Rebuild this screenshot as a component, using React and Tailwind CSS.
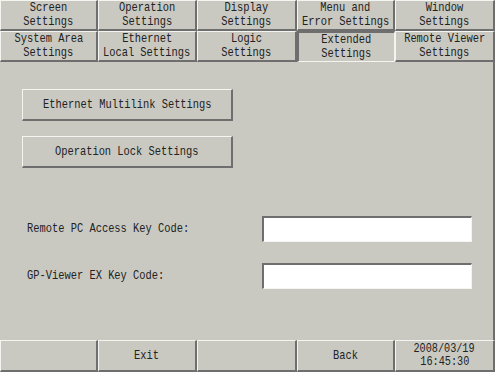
const raised =
  'border-t border-l border-t-[#f4f4f0] border-l-[#f4f4f0] border-b-2 border-r-2 border-b-[#6e6e6e] border-r-[#6e6e6e]'
const sunken =
  'border-t-2 border-l-2 border-t-[#6e6e6e] border-l-[#6e6e6e] border-b border-r border-b-[#f4f4f0] border-r-[#f4f4f0]'

const tabs = [
  ['Screen', 'Settings'],
  ['Operation', 'Settings'],
  ['Display', 'Settings'],
  ['Menu and', 'Error Settings'],
  ['Window', 'Settings'],
  ['System Area', 'Settings'],
  ['Ethernet', 'Local Settings'],
  ['Logic', 'Settings'],
  ['Extended', 'Settings'],
  ['Remote Viewer', 'Settings'],
]

function Txt({ children, className = '' }) {
  return (
    <span className={`inline-block scale-x-[0.8] whitespace-nowrap ${className}`}>{children}</span>
  )
}

function Field({ label }) {
  return (
    <div className="flex items-center">
      <div className="w-[240px] pl-[5px] text-[13px] leading-[14px]">
        <Txt className="origin-left">{label}</Txt>
      </div>
      <div className={`h-[26px] w-[210px] bg-white ${sunken}`} />
    </div>
  )
}

export default function App() {
  return (
    <div className="flex h-[372px] w-[495px] flex-col overflow-hidden bg-[#c9c9c1] font-['Liberation_Mono',monospace] text-[#222]">
      <div className="grid h-[62px] grid-cols-[98px_99px_100px_98px_100px] grid-rows-2">
        {tabs.map((t, i) => (
          <div
            key={i}
            className={`flex flex-col items-center justify-center text-[13px] leading-[14px] ${
              i === 8 ? sunken : raised
            }`}
          >
            <Txt>{t[0]}</Txt>
            <Txt>{t[1]}</Txt>
          </div>
        ))}
      </div>

      <div className="flex flex-1 flex-col border-r-2 border-r-[#6e6e6e] pl-[22px] pt-[27px]">
        <div className="flex flex-col gap-[15px]">
          <button
            type="button"
            className={`flex h-[32px] w-[211px] items-center justify-center text-[13px] ${raised}`}
          >
            <Txt>Ethernet Multilink Settings</Txt>
          </button>
          <button
            type="button"
            className={`flex h-[32px] w-[211px] items-center justify-center text-[13px] ${raised}`}
          >
            <Txt>Operation Lock Settings</Txt>
          </button>
        </div>

        <div className="mt-[48px] flex flex-col gap-[21px]">
          <Field label="Remote PC Access Key Code:" />
          <Field label="GP-Viewer EX Key Code:" />
        </div>
      </div>

      <div className="grid h-[32px] grid-cols-[98px_99px_100px_98px_100px]">
        <div className={raised} />
        <div className={`flex items-center justify-center text-[13px] ${raised}`}>
          <Txt>Exit</Txt>
        </div>
        <div className={raised} />
        <div className={`flex items-center justify-center text-[13px] ${raised}`}>
          <Txt>Back</Txt>
        </div>
        <div className={`flex flex-col items-center justify-center text-[12px] leading-[13px] ${raised}`}>
          <Txt className="scale-x-[0.85]">2008/03/19</Txt>
          <Txt className="scale-x-[0.85]">16:45:30</Txt>
        </div>
      </div>
    </div>
  )
}
